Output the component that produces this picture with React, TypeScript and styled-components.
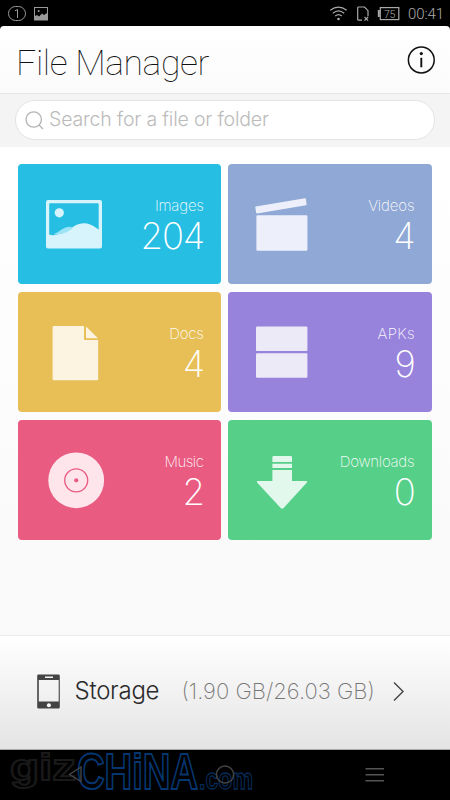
import React from "react";
import styled, { createGlobalStyle } from "styled-components";

const Global = createGlobalStyle`
  * { box-sizing: border-box; }
  body { margin: 0; background: #000; }
`;

const Screen = styled.div`
  width: 450px;
  height: 800px;
  display: flex;
  flex-direction: column;
  background: #000;
  overflow: hidden;
  font-family: Inter, "Liberation Sans", sans-serif;
`;

const StatusBar = styled.div`
  height: 26px;
  flex: none;
  display: flex;
  justify-content: space-between;
  color: #aaa;
`;

const StatusGroup = styled.div`
  display: flex;
  height: 26px;
`;

const Clock = styled.span`
  width: 42px;
  padding-top: 1px;
  font: 300 15px/26px Roboto, sans-serif;
  letter-spacing: -0.1px;
  white-space: nowrap;
`;

const Header = styled.header`
  height: 68px;
  flex: none;
  display: flex;
  justify-content: space-between;
  padding: 0 14px 0 16px;
  border-radius: 4px 4px 0 0;
  background: linear-gradient(#fff, #fbfbfb);
  border-bottom: 1px solid #e6e6e6;
`;

const Title = styled.h1`
  margin: 0;
  padding-top: 16px;
  font: 100 35.5px/42px Roboto, sans-serif;
  letter-spacing: -0.42px;
  color: #111;
  white-space: nowrap;
`;

const InfoButton = styled.button`
  border: 0;
  padding: 19px 0 0;
  width: 29px;
  height: 50px;
  background: none;
`;

const SearchStrip = styled.div`
  height: 53px;
  flex: none;
  padding: 6px 15px;
  background: #f4f4f4;
`;

const SearchField = styled.div`
  height: 40px;
  display: flex;
  padding-left: 8px;
  border: 1px solid #e4e4e4;
  border-radius: 20px;
  background: #fff;
`;

const Placeholder = styled.span`
  margin-left: 3px;
  font: 300 19.5px/37px Inter, "Liberation Sans", sans-serif;
  letter-spacing: -0.18px;
  color: #bbb;
  white-space: nowrap;
`;

const Tiles = styled.main`
  height: 488px;
  flex: none;
  display: grid;
  grid-template-columns: 203.4px 203.6px;
  grid-auto-rows: 120.4px;
  gap: 7.6px 7px;
  padding: 17px 18px;
  background: linear-gradient(#fff, #f9f9f9);
`;

const Tile = styled.section<{ $color: string }>`
  display: flex;
  justify-content: space-between;
  padding-right: 17.5px;
  border-radius: 4px;
  background: ${(p) => p.$color};

  &:nth-child(even) {
    padding-left: 0.6px;
  }
`;

const TileText = styled.div`
  display: flex;
  flex-direction: column;
  align-items: flex-end;
  padding-top: 32px;
  color: #fff;
`;

const Label = styled.span<{ $track: number }>`
  font: 200 15px/20px Inter, sans-serif;
  letter-spacing: ${(p) => p.$track}px;
  margin-right: ${(p) => -p.$track}px;
  opacity: 0.95;
`;

const Count = styled.span`
  font: 200 36.5px/40px Inter, sans-serif;
  letter-spacing: -1.2px;
  margin-right: 0;
`;

const StorageBar = styled.footer`
  height: 115px;
  flex: none;
  display: flex;
  padding: 0 0 0 37px;
  border-top: 1px solid #ececec;
  border-bottom: 1px solid #aaa;
  background: linear-gradient(#fff, #e4e4e4);
`;

const StorageName = styled.span`
  width: 107px;
  margin-left: 13.5px;
  font: 300 24px/110px Inter, sans-serif;
  letter-spacing: -0.25px;
  color: #2a2a2a;
`;

const StorageSize = styled.span`
  width: 210.5px;
  font: 200 22px/110px Inter, sans-serif;
  letter-spacing: 0;
  color: #777;
  white-space: nowrap;
`;

const NavBar = styled.nav`
  flex: 1;
  display: flex;
`;

const NavDrawing = styled.svg`
  overflow: visible;
`;

const tiles = [
  { name: "Images", count: 204, color: "#27bee3", track: -0.2 },
  { name: "Videos", count: 4, color: "#90a8d5", track: -0.15 },
  { name: "Docs", count: 4, color: "#e7bf56", track: -0.2 },
  { name: "APKs", count: 9, color: "#9783dc", track: 0.3 },
  { name: "Music", count: 2, color: "#ea5b82", track: -0.5 },
  { name: "Downloads", count: 0, color: "#56cf89", track: -0.3 },
];

const glyphs: Record<string, React.ReactNode> = {
  Images: (
    <g>
      <path fill="#d7f4fc" fillRule="evenodd" d="M30 36h52a2 2 0 0 1 2 2v44.500a2 2 0 0 1-2 2H30a2 2 0 0 1-2-2V38a2 2 0 0 1 2-2zM32 39.200q-.8 0-.8.800v30.500q3 1.200 6 .5 7-1 14-5 7-7 15-6.800 6 .2 11.500 4.300 2 1.600 3 2.200V40q0-.8-.8-.8z" />
      <path fill="#9be3f5" d="M36 70q4-1.500 7.500-4.500 7-4.500 11.500-1.600-7 5.500-12 6.200-3 .6-7 .5z" />
      <circle cx="41.300" cy="48.800" r="4.600" fill="#d7f4fc" />
    </g>
  ),
  Videos: (
    <g fill="#edf0fa">
      <path d="M26.800 42.600 76 34.300q.8 0 .9.700l.7 5.300q0 .8-.7.900L28.200 49.500q-.9.100-1-.7l-.9-5.200q-.1-.8.500-1z" />
      <rect x="27.400" y="51.300" width="51" height="35.500" rx="1" />
    </g>
  ),
  Docs: (
    <g fill="#fcf4e1">
      <path d="M35.800 34H66v13q0 1 1 1h13.200v39q0 1.200-1.200 1.200H35.800q-1.200 0-1.200-1.200V35.200q0-1.200 1.200-1.200z" />
      <path d="M68 34.400 80 46.200H68z" />
    </g>
  ),
  APKs: (
    <g fill="#edeaf8">
      <rect x="27" y="34.500" width="51.400" height="24.600" rx="1.200" />
      <rect x="27" y="61.200" width="51.400" height="24.500" rx="1.200" />
    </g>
  ),
  Music: (
    <g>
      <circle cx="58.200" cy="60.300" r="27.900" fill="#fde5eb" />
      <circle cx="58.200" cy="60.300" r="11.500" fill="none" stroke="#ea5b82" strokeWidth="1.300" />
      <circle cx="58.200" cy="60.300" r="2.100" fill="#ea5b82" />
    </g>
  ),
  Downloads: (
    <g fill="#e2f8ec">
      <path d="M44.600 36h17.200q1.200 0 1.200 1.200v4.700H43.400v-4.700q0-1.200 1.200-1.200zM43.400 43.700H63V48H43.400zM43.400 50H63v11h14q2 .2.700 1.700L54.600 88q-1.400 1.500-2.900 0L28.300 62.800q-1.200-1.600.7-1.800h14.400z" />
    </g>
  ),
};

export default function App() {
  return (
    <Screen>
      <Global />
      <StatusBar>
        <StatusGroup>
          <svg width="60" height="26" fill="none" stroke="#999">
            <rect x="8.500" y="6.500" width="17" height="14" rx="7" />
            <path d="M15 10.800 17.500 9.500V18" />
            <rect x="34.500" y="7.500" width="13" height="12.500" />
            <path d="M35 20v-4l2-1 2 1.500 3-3 2 1.500 3-2v7z" fill="#999" stroke="none" />
            <circle cx="38.700" cy="11" r="1" fill="#999" stroke="none" />
          </svg>
        </StatusGroup>
        <StatusGroup>
          <svg width="78" height="26" fill="none" stroke="#aaa" strokeWidth="1.200">
            <path d="M.3 10.300q8-6.400 16.400 0M2.800 13.200q5.700-4.700 11.400 0M5.200 16q3.300-2.700 6.600 0" />
            <circle cx="8.500" cy="19" r="1.300" fill="#aaa" stroke="none" />
            <path d="M32 20.200h-3.500q-.8 0-.8-.8V7.800q0-.8.800-.8h6l3.500 3.700v5.500" />
            <path d="m34.500 17 3.600 3.600m0-3.600-3.600 3.600" />
            <path d="M48.800 10v7" strokeWidth="2" />
            <rect x="50.300" y="7.600" width="18.500" height="12" />
            <text x="54" y="17.600" fill="#aaa" stroke="none" fontFamily="Roboto" fontSize="10.500" fontWeight="300" letterSpacing="-0.300">75</text>
          </svg>
          <Clock>00:41</Clock>
        </StatusGroup>
      </StatusBar>
      <Header>
        <Title>File Manager</Title>
        <InfoButton aria-label="Info">
          <svg width="29" height="30" fill="none" stroke="#111">
            <circle cx="14.300" cy="15" r="12.900" strokeWidth="1.500" />
            <circle cx="14.300" cy="8.600" r="1.600" fill="#111" stroke="none" />
            <path d="M14.300 12.800v9.500" strokeWidth="1.900" />
          </svg>
        </InfoButton>
      </Header>
      <SearchStrip>
        <SearchField>
          <svg width="22" height="38" fill="none" stroke="#b4b4b4" strokeWidth="1.300">
            <circle cx="9.700" cy="18.500" r="7.700" />
            <path d="m15 24 4 4" />
          </svg>
          <Placeholder>Search for a file or folder</Placeholder>
        </SearchField>
      </SearchStrip>
      <Tiles>
        {tiles.map((t) => (
          <Tile key={t.name} $color={t.color}>
            <svg width="90" height="120">{glyphs[t.name]}</svg>
            <TileText>
              <Label $track={t.track}>{t.name}</Label>
              <Count>{t.count}</Count>
            </TileText>
          </Tile>
        ))}
      </Tiles>
      <StorageBar>
        <svg width="24" height="113">
          <path fill="#444" fillRule="evenodd" d="M1.500 38.500h20q1.300 0 1.300 1.300v31.500q0 1.300-1.300 1.300h-20q-1.300 0-1.300-1.300V39.800q0-1.300 1.300-1.300zM1.800 44v21.500h19.900V44zM8 40.500v1.400h8v-1.400z" />
          <circle cx="11.900" cy="69.200" r="2" fill="#fff" />
        </svg>
        <StorageName>Storage</StorageName>
        <StorageSize>(1.90 GB/26.03 GB)</StorageSize>
        <svg width="14" height="113" fill="none" stroke="#444" strokeWidth="1.400">
          <path d="m2 46.500 9 9-9 9" />
        </svg>
      </StorageBar>
      <NavBar>
        <NavDrawing width="450" height="50" fill="none">
          <g fontFamily="Liberation Sans, sans-serif" fontWeight="700" strokeWidth="2" fill="#000">
            <text x="10" y="30" fontSize="37" textLength="66" lengthAdjust="spacingAndGlyphs" stroke="#191919">giz</text>
            <text x="77" y="38.500" fontSize="50" textLength="121" lengthAdjust="spacingAndGlyphs" stroke="#05366f">CHiNA</text>
            <text x="199" y="38.500" fontSize="29" textLength="54" lengthAdjust="spacingAndGlyphs" stroke="#052a55" strokeWidth="1.300">.com</text>
          </g>
          <path d="M81 17v14.500L69.500 24.500z" stroke="#444" strokeWidth="1.400" />
          <circle cx="225" cy="24.500" r="8.600" stroke="#444" strokeWidth="1.500" />
          <path d="M365.500 18.700h18.500M365.500 24.700h18.500M365.500 30.700h18.500" stroke="#555" strokeWidth="1.500" />
        </NavDrawing>
      </NavBar>
    </Screen>
  );
}
